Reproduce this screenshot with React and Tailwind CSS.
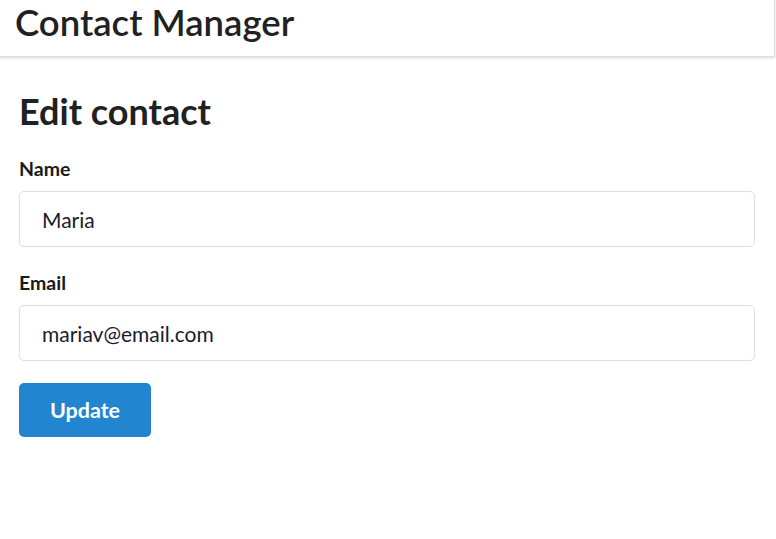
import React, { useState } from 'react';

export default function App() {
  const [name, setName] = useState('Maria');
  const [email, setEmail] = useState('mariav@email.com');

  return (
    <div className="min-h-[539px] bg-white text-[#1f1f1f]" style={{ fontFamily: 'Lato, "Open Sans", sans-serif' }}>
      {/* Header */}
      <div className="w-[775px] h-[57px] bg-white border-r border-b border-[#dcdcdc] shadow-[0_1px_3px_rgba(0,0,0,0.15)] px-[15px] flex items-center">
        <h1 className="text-[36.5px] font-semibold leading-none text-[#212121] -mt-[11px]">Contact Manager</h1>
      </div>

      {/* Form */}
      <div className="px-[19px] pt-[36px] w-[774px]">
        <h2 className="text-[36px] font-bold leading-none text-[#212121] mb-[30px]">Edit contact</h2>

        <form className="flex flex-col" onSubmit={e => e.preventDefault()}>
          <label className="text-[19.5px] font-bold leading-[20px] mb-[12px] text-[#1a1a1a]">Name</label>
          <input
            value={name}
            onChange={e => setName(e.target.value)}
            className="h-[56px] w-full border border-[#dedede] rounded-[5px] px-[22px] text-[21px] text-[#1a1a2e] outline-none mb-[26px]"
            style={{ fontFamily: 'Lato, sans-serif' }}
          />

          <label className="text-[19.5px] font-bold leading-[20px] mb-[12px] text-[#1a1a1a]">Email</label>
          <input
            value={email}
            onChange={e => setEmail(e.target.value)}
            className="h-[56px] w-full border border-[#dedede] rounded-[5px] px-[22px] text-[21px] text-[#1a1a2e] outline-none mb-[22px]"
            style={{ fontFamily: 'Lato, sans-serif' }}
          />

          <div>
            <button
              type="submit"
              className="w-[132px] h-[54px] bg-[#2185d0] hover:bg-[#1678c2] text-white text-[21.5px] font-bold rounded-[5px]"
            >
              Update
            </button>
          </div>
        </form>
      </div>
    </div>
  );
}
